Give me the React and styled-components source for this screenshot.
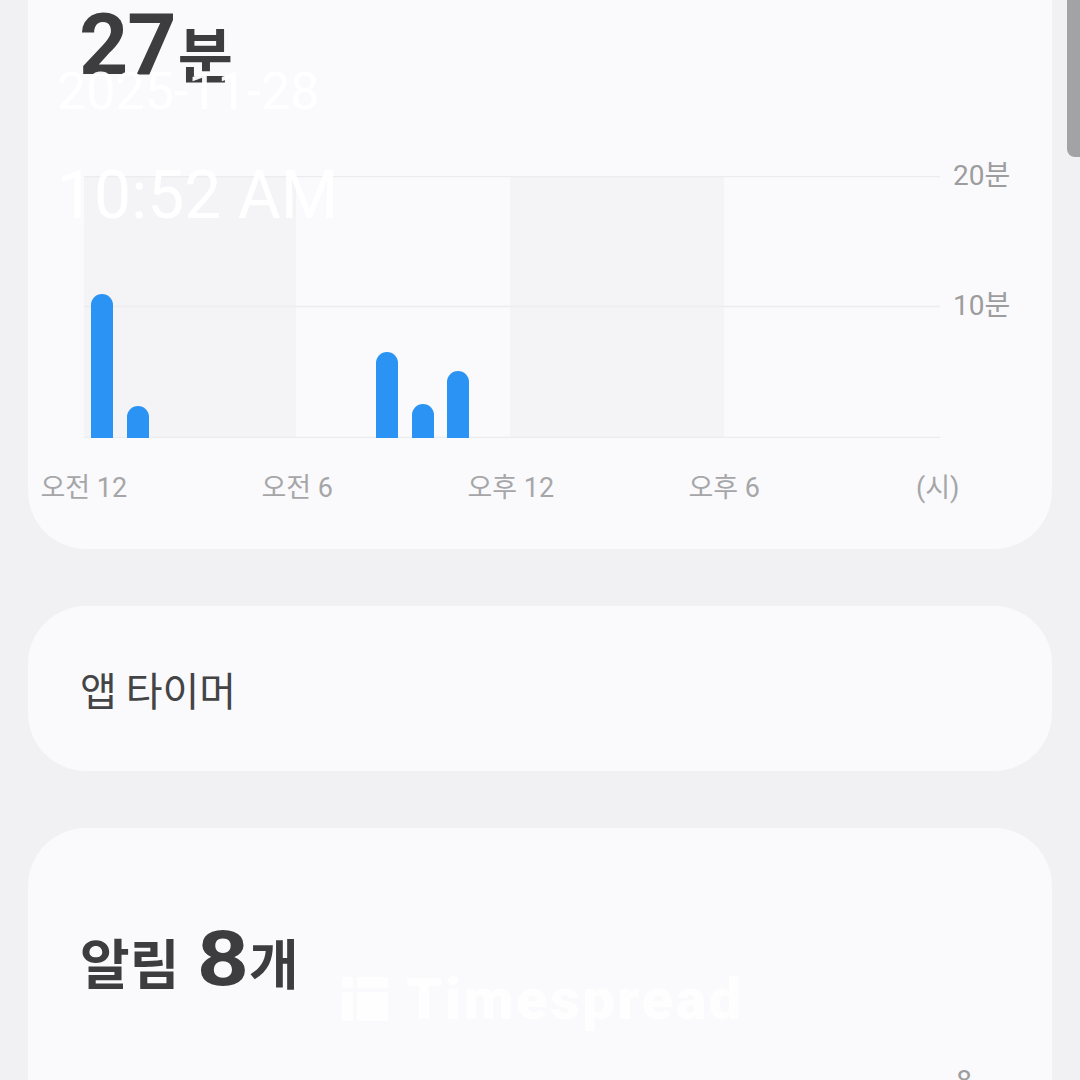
import React from 'react';
import styled, { createGlobalStyle } from 'styled-components';

const GlobalStyle = createGlobalStyle`
  body {
    margin: 0;
    background: #f1f1f3;
    font-family: Roboto, "Noto Sans CJK KR", sans-serif;
  }
`

const bars = [
  { x: 7, h: 144 },
  { x: 43, h: 32 },
  { x: 292, h: 86 },
  { x: 328, h: 34 },
  { x: 363, h: 67 },
];

const hours = ['오전 12', '오전 6', '오후 12', '오후 6', '(시)'];

function barPath(x, h, w = 22, base = 262) {
  const r = w / 2;
  const top = base - h;
  return `M${x} ${base} V${top + r} A${r} ${r} 0 0 1 ${x + w} ${top + r} V${base} Z`;
}

function App() {
  return (
    <Page>
      <GlobalStyle />
      <List>
        <UsageCard>
          <Total>
            <Big>27</Big><Unit>분</Unit>
          </Total>
          <ChartRow>
            <svg width="856" height="262" viewBox="0 0 856 262">
              <rect x="0" y="0" width="212" height="262" fill="#f4f4f6" />
              <rect x="426" y="0" width="214" height="262" fill="#f4f4f6" />
              <line x1="0" y1="0.5" x2="856" y2="0.5" stroke="#ececee" strokeWidth="1.5" />
              <line x1="0" y1="130.5" x2="856" y2="130.5" stroke="#ececee" strokeWidth="1.5" />
              <line x1="0" y1="261.5" x2="856" y2="261.5" stroke="#ececee" strokeWidth="1.5" />
              {bars.map((b, i) => (
                <path key={i} d={barPath(b.x, b.h)} fill="#2a93f3" />
              ))}
            </svg>
            <YAxis>
              <YLabel>20분</YLabel>
              <YLabel>10분</YLabel>
            </YAxis>
          </ChartRow>
          <XAxis>
            {hours.map((h) => (
              <XLabel key={h}>{h}</XLabel>
            ))}
          </XAxis>
        </UsageCard>

        <TimerCard>
          <TimerText>앱 타이머</TimerText>
        </TimerCard>

        <AlertCard>
          <AlertTitle>
            <AlertWord>알림</AlertWord>
            <AlertNum>8</AlertNum>
            <AlertWord>개</AlertWord>
          </AlertTitle>
          <AlertAxis>8</AlertAxis>
        </AlertCard>
      </List>

      <Scrollbar />

      <Stamp>
        <StampDate>2025-11-28</StampDate>
        <StampTime>10:52 AM</StampTime>
      </Stamp>

      <Watermark>
        <svg width="46" height="44" viewBox="0 0 46 44">
          <rect x="0" y="0" width="11" height="11" rx="2" fill="#fff" />
          <rect x="0" y="15" width="11" height="29" rx="2" fill="#fff" />
          <rect x="15" y="0" width="31" height="11" rx="2" fill="#fff" />
          <rect x="15" y="15" width="31" height="29" rx="2" fill="#fff" />
        </svg>
        <WatermarkText>Timespread</WatermarkText>
      </Watermark>
    </Page>
  )
};

const Page = styled.div`
  position: relative;
  width: 1080px;
  height: 1080px;
  overflow: hidden;
  background: #f1f1f3;
`
const List = styled.div`
  display: flex;
  flex-direction: column;
  gap: 57px;
  padding: 0 28px;
  margin-top: -60px;
`
const Card = styled.div`
  background: #fafafc;
  border-radius: 58px;
`
const UsageCard = styled(Card)`
  padding: 62px 0 47px 56px;
`
const Total = styled.div`
  display: flex;
  align-items: baseline;
  color: #3d3d3f;
  margin-left: -5px;
  height: 88px;
`
const Big = styled.span`
  font-family: Roboto, sans-serif;
  font-size: 86px;
  font-weight: 700;
  line-height: 86px;
  letter-spacing: -1px;
`
const Unit = styled.span`
  font-family: "Noto Sans CJK KR", sans-serif;
  font-size: 60px;
  font-weight: 700;
  line-height: 60px;
  margin-left: 2px;
  position: relative;
  top: 4px;
`
const ChartRow = styled.div`
  display: flex;
  margin-top: 86px;
`
const YAxis = styled.div`
  display: flex;
  flex-direction: column;
  gap: 102px;
  margin: -14px 0 0 13px;
`
const YLabel = styled.div`
  font-size: 28px;
  line-height: 28px;
  color: #9d9d9f;
`
const XAxis = styled.div`
  display: grid;
  grid-template-columns: repeat(5, 213.5px);
  margin: 36px 0 0 -107px;
`
const XLabel = styled.div`
  text-align: center;
  font-size: 27px;
  line-height: 28px;
  color: #a6a6a8;
`
const TimerCard = styled(Card)`
  height: 165px;
  display: flex;
  align-items: center;
  padding-left: 52px;
`
const TimerText = styled.div`
  font-family: "Noto Sans CJK KR", sans-serif;
  font-size: 40px;
  font-weight: 400;
  color: #444446;
`
const AlertCard = styled(Card)`
  height: 400px;
  padding: 86px 52px 0;
`
const AlertTitle = styled.div`
  display: flex;
  align-items: baseline;
  color: #3d3d3f;
`
const AlertWord = styled.span`
  font-family: "Noto Sans CJK KR", sans-serif;
  font-size: 54px;
  font-weight: 700;
`
const AlertNum = styled.span`
  font-family: Roboto, sans-serif;
  font-size: 76px;
  font-weight: 700;
  margin: 0 4px 0 22px;
  transform: scaleX(1.2);
`
const AlertAxis = styled.div`
  text-align: right;
  margin: 60px 28px 0 0;
  font-size: 28px;
  color: #9d9d9f;
`
const Scrollbar = styled.div`
  position: absolute;
  top: 0;
  right: 0;
  width: 13px;
  height: 157px;
  background: #a3a3a5;
  border-radius: 0 0 0 8px;
`
const Stamp = styled.div`
  position: absolute;
  left: 57px;
  top: 66px;
  color: rgba(255, 255, 255, 0.95);
  font-family: Roboto, sans-serif;
`
const StampDate = styled.div`
  font-size: 52px;
  line-height: 52px;
`
const StampTime = styled.div`
  font-size: 66px;
  line-height: 66px;
  margin-top: 45px;
`
const Watermark = styled.div`
  position: absolute;
  left: 342px;
  top: 977px;
  display: flex;
  align-items: center;
  gap: 18px;
  opacity: 0.9;
`
const WatermarkText = styled.div`
  font-family: Roboto, sans-serif;
  font-size: 58px;
  font-weight: 900;
  line-height: 44px;
  color: #fff;
  letter-spacing: 2.5px;
`

export default App;
